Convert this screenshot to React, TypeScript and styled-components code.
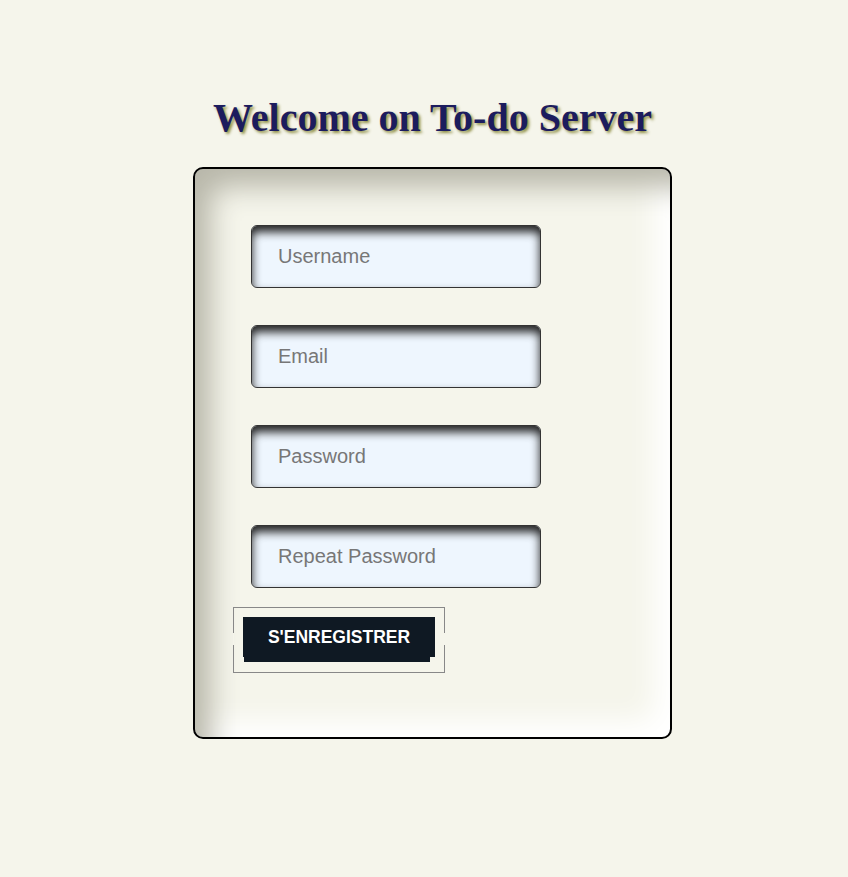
import React, { FC } from 'react'
import styled, { createGlobalStyle } from 'styled-components'

const GlobalStyle = createGlobalStyle`
  body {
    background: #f5f5eb;
    font-family: 'Liberation Sans', Arial, sans-serif;
    margin: 8px;
  }
`

const Page = styled.main`
  display: flex;
  flex-direction: column;
  align-items: center;
  padding-left: 17px;
`

const Title = styled.h1`
  color: #1c1c5e;
  font-family: 'Liberation Serif', 'Times New Roman', serif;
  font-size: 40px;
  font-weight: 700;
  line-height: 46px;
  margin: 87px 0 26px;
  text-shadow: 2px 2px 3px #8f8f45;
`

const Card = styled.form`
  background: #f5f5eb;
  border: 2px solid #000;
  border-radius: 10px;
  box-shadow: inset 22px 24px 28px -6px #b9b8ab,
    inset -22px -22px 28px -6px #ffffff;
  box-sizing: border-box;
  display: flex;
  flex-direction: column;
  height: 572px;
  padding: 56px 0 0 38px;
  width: 479px;
`

const Field = styled.input`
  background: #eef6fe;
  border: 1px solid #333;
  border-radius: 6px;
  box-shadow: inset 0 6px 10px #222;
  box-sizing: border-box;
  color: #333;
  font-family: 'Liberation Sans', Arial, sans-serif;
  font-size: 20px;
  height: 63px;
  margin: 0 0 37px 18px;
  outline: none;
  padding: 0 0 0 26px;
  width: 290px;

  &::placeholder {
    color: #777;
  }

  &:last-of-type {
    margin-bottom: 19px;
  }
`

const ButtonFrame = styled.div`
  border: 1px solid #888;
  box-sizing: border-box;
  height: 66px;
  padding: 9px 0 0 9px;
  position: relative;
  width: 212px;

  &::before,
  &::after {
    background: #f5f5eb;
    content: '';
    height: 12px;
    position: absolute;
    top: 25px;
    width: 1px;
  }

  &::before {
    left: -1px;
  }

  &::after {
    right: -1px;
  }
`

const Button = styled.button`
  background: #0f1923;
  border: none;
  box-shadow: -2px 8px 0 -3px #0f1923;
  color: #fff;
  cursor: pointer;
  font-family: 'Liberation Sans', Arial, sans-serif;
  font-size: 17.5px;
  font-weight: 700;
  height: 40px;
  padding: 0;
  width: 192px;
`

const App: FC = () => (
  <>
    <GlobalStyle />
    <Page>
      <Title>Welcome on To-do Server</Title>
      <Card onSubmit={e => e.preventDefault()}>
        <Field type="text" placeholder="Username" />
        <Field type="email" placeholder="Email" />
        <Field type="password" placeholder="Password" />
        <Field type="password" placeholder="Repeat Password" />
        <ButtonFrame>
          <Button type="submit">S&apos;ENREGISTRER</Button>
        </ButtonFrame>
      </Card>
    </Page>
  </>
)

export default App
